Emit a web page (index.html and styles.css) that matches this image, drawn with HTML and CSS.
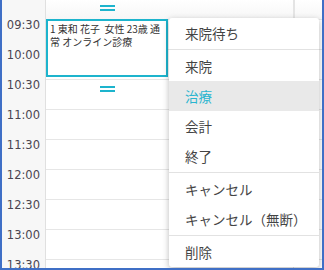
FILE: index.html
```html
<!DOCTYPE html>
<html lang="ja">
<head>
    <meta charset="UTF-8">
    <meta name="viewport" content="width=device-width, initial-scale=1.0">
    <title>予約表</title>
    <link rel="stylesheet" href="styles.css">
</head>
<body>
    <div class="frame">
        <div class="times">
            <div class="time-head"></div>
            <div class="time">09:30</div>
            <div class="time">10:00</div>
            <div class="time">10:30</div>
            <div class="time">11:00</div>
            <div class="time">11:30</div>
            <div class="time">12:00</div>
            <div class="time">12:30</div>
            <div class="time">13:00</div>
            <div class="time">13:30</div>
        </div>

        <div class="grid">
            <div class="row head"><div class="cell"></div><div class="cell"></div></div>
            <div class="row"><div class="cell"></div><div class="cell"></div></div>
            <div class="row"><div class="cell"></div><div class="cell"></div></div>
            <div class="row"><div class="cell"></div><div class="cell"></div></div>
            <div class="row"><div class="cell"></div><div class="cell"></div></div>
            <div class="row"><div class="cell"></div><div class="cell"></div></div>
            <div class="row"><div class="cell"></div><div class="cell"></div></div>
            <div class="row"><div class="cell"></div><div class="cell"></div></div>
            <div class="row"><div class="cell"></div><div class="cell"></div></div>
            <div class="row"><div class="cell"></div><div class="cell"></div></div>

            <div class="handle handle-top"></div>
            <div class="event">1 東和 花子&nbsp; 女性 23歳 通常 オンライン診療</div>
            <div class="handle handle-bottom"></div>
        </div>

        <ul class="menu">
            <li class="item">来院待ち</li>
            <li class="sep"></li>
            <li class="item">来院</li>
            <li class="item active">治療</li>
            <li class="item">会計</li>
            <li class="item">終了</li>
            <li class="sep"></li>
            <li class="item">キャンセル</li>
            <li class="item">キャンセル（無断）</li>
            <li class="sep"></li>
            <li class="item">削除</li>
        </ul>
    </div>
</body>
</html>
```

FILE: styles.css
```css
body {
    margin: 0;
    font-family: "Noto Sans CJK JP", "Noto Sans", sans-serif;
    background: #ffffff;
}
.frame {
    position: relative;
    display: flex;
    width: 324px;
    height: 270px;
    box-sizing: border-box;
    border: 2px solid #3f6fc6;
    border-top: none;
    overflow: hidden;
}
.times {
    width: 43px;
    flex-shrink: 0;
    background: #f7f7f7;
    border-right: 1px solid #e0e0e0;
}
.time-head {
    height: 19px;
}
.time {
    height: 30px;
    box-sizing: border-box;
    padding: 0 5px 0 0;
    text-align: right;
    font-family: "DejaVu Sans", sans-serif;
    font-size: 11.5px;
    line-height: 12px;
    color: #4a4550;
}
.grid {
    position: relative;
    flex: 1;
}
.row {
    display: flex;
    height: 30px;
    box-sizing: border-box;
    border-top: 1px solid #e6e6e6;
}
.row.head {
    height: 19px;
    border-top: none;
    background: linear-gradient(#ffffff, #f6f6f6);
}
.cell {
    width: 29px;
}
.cell:first-child {
    width: 247px;
    border-right: 2px solid #e4e4e4;
}
.row:not(.head) .cell:first-child {
    border-right-width: 1px;
}
.event {
    position: absolute;
    left: 0;
    top: 19px;
    width: 122px;
    height: 58px;
    box-sizing: border-box;
    border: 2px solid #1db4cd;
    background: #ffffff;
    padding: 1px 2px;
    font-size: 10px;
    line-height: 13px;
    color: #333333;
}
.handle {
    position: absolute;
    left: 54px;
    width: 15px;
    height: 2px;
    border-top: 2px solid #1db4cd;
    border-bottom: 2px solid #1db4cd;
}
.handle-top {
    top: 5px;
}
.handle-bottom {
    top: 86px;
}
.menu {
    position: absolute;
    left: 167px;
    top: 18px;
    width: 150px;
    margin: 0;
    padding: 0;
    list-style: none;
    background: #ffffff;
    border-radius: 3px;
    box-shadow: 0 2px 6px rgba(0, 0, 0, 0.28);
}
.item {
    height: 30px;
    padding-left: 16px;
    font-size: 13.5px;
    line-height: 30px;
    color: #444444;
}
.item.active {
    background: #e9e9e9;
    color: #29b5cf;
}
.sep {
    height: 1px;
    margin: 1px 0;
    background: #e2e2e2;
}
```
